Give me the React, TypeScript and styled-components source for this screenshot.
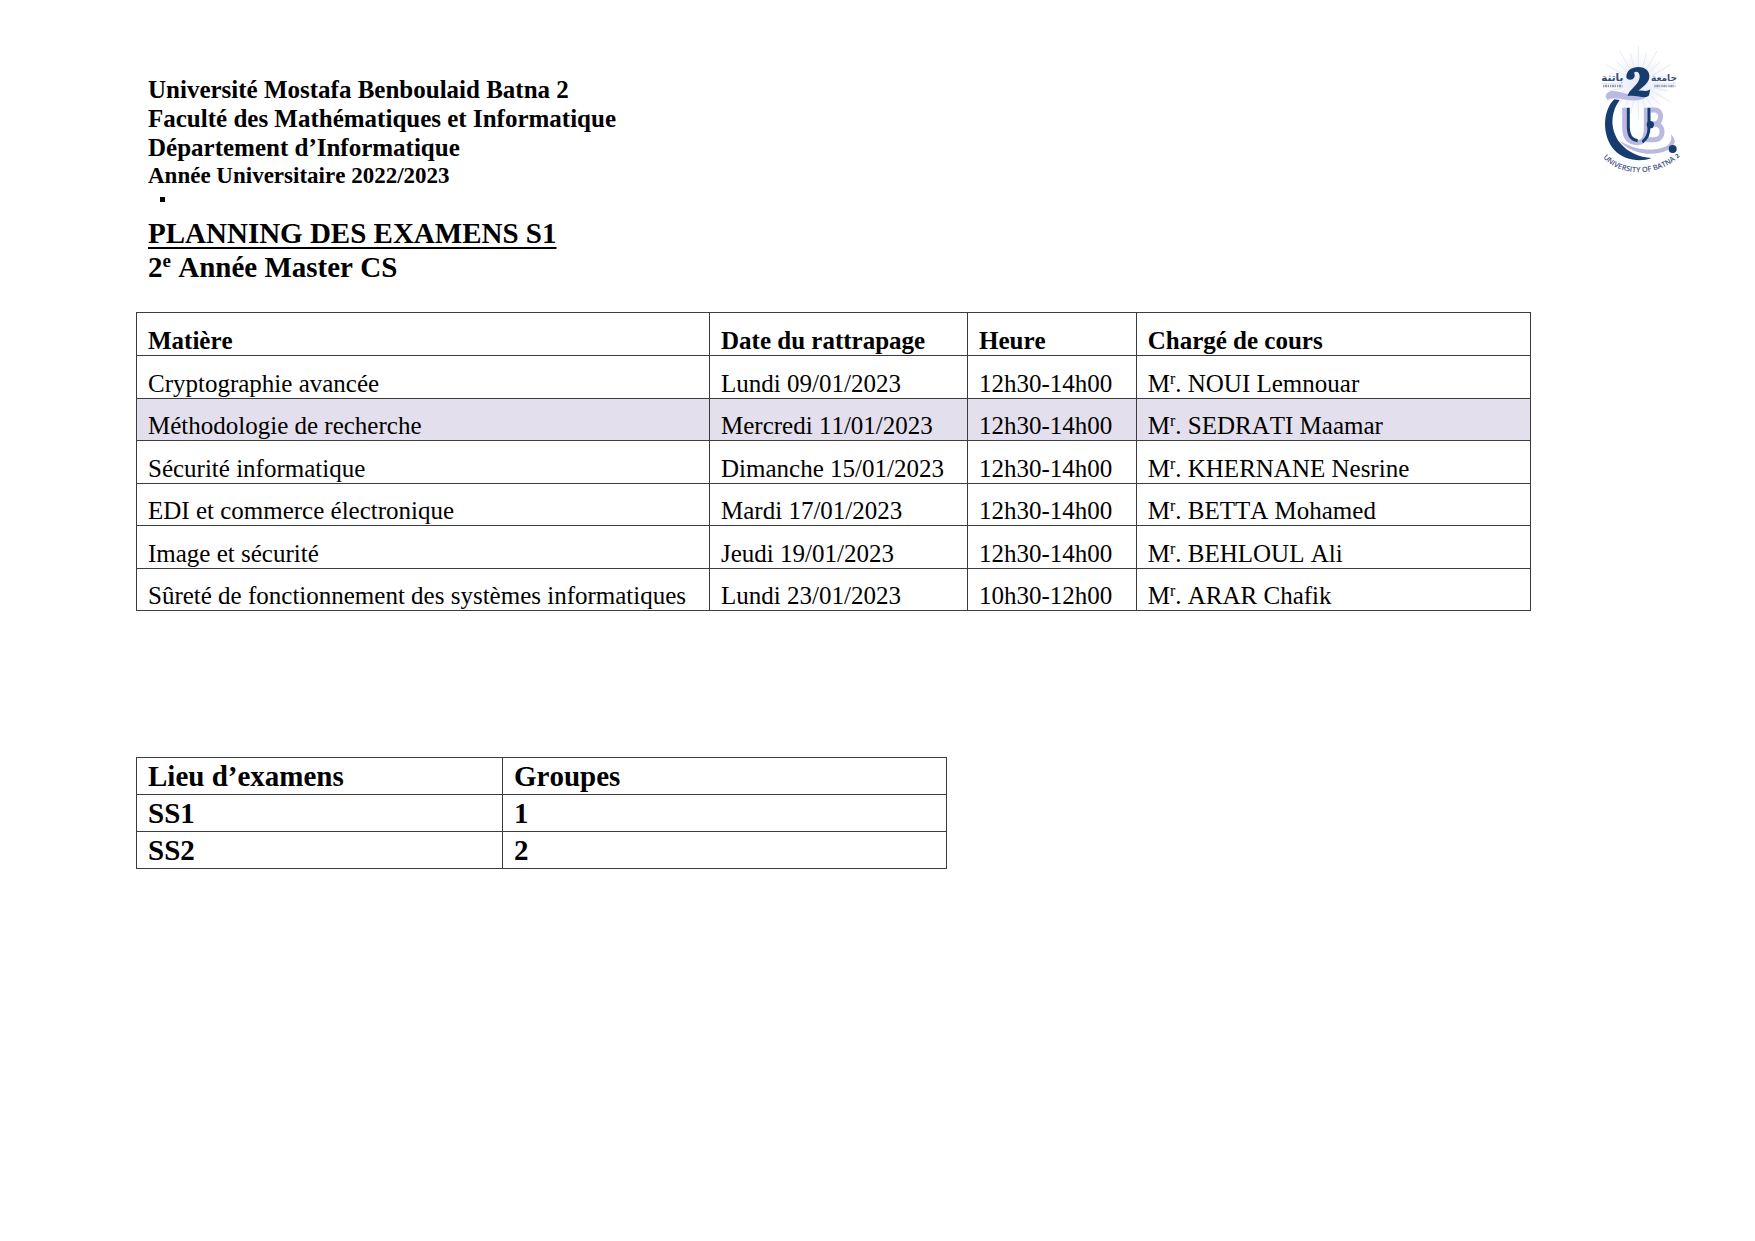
import React from "react";
import styled, { createGlobalStyle } from "styled-components";

const GlobalStyle = createGlobalStyle`
  body {
    margin: 0;
    background: #fff;
    color: #000;
    font-family: "Liberation Serif", "Times New Roman", serif;
    font-size: 25px;
    font-kerning: none;
    line-height: 28px;
  }
`;

const Page = styled.main`
  padding: 40px 60px 40px 136px;
`;

const Header = styled.header`
  display: flex;
  justify-content: space-between;
  align-items: flex-start;
`;

const Heading = styled.div`
  padding: 35px 0 0 12px;
  font-weight: bold;
`;

const Line = styled.p<{ $small?: boolean }>`
  margin: 0;
  font-size: ${(p) => (p.$small ? 23 : 25)}px;
  line-height: ${(p) => (p.$small ? 27 : 29)}px;
`;

const Bullet = styled.span`
  display: block;
  width: 5px;
  height: 5px;
  margin: 8px 0 0 12px;
  background: #000;
`;

const Title = styled.h1`
  margin: 14px 0 0;
  font-size: 29px;
  line-height: 34px;
  text-decoration: underline;
  text-decoration-thickness: 2px;
  text-underline-offset: 4px;
`;

const Subtitle = styled.h2`
  margin: 0;
  font-size: 29px;
  line-height: 34px;
`;

const Sup = styled.sup<{ $size: number; $rise: number }>`
  font-size: ${(p) => p.$size}px;
  line-height: 0;
  vertical-align: ${(p) => p.$rise}px;
`;

const LogoArt = styled.svg`
  width: 110px;
  height: 150px;
  flex: none;
`;

const Schedule = styled.table`
  width: 89.5%;
  height: 299px;
  margin-top: 28px;
  border-collapse: collapse;
  table-layout: fixed;

  th {
    padding-top: 14px;
  }
`;

const Rooms = styled.table`
  width: 52%;
  margin-top: 146px;
  border-collapse: collapse;
  table-layout: fixed;
  font-size: 29px;
  line-height: 36px;
  font-weight: bold;
`;

const Col = styled.col<{ $width: string }>`
  width: ${(p) => p.$width};
`;

const Row = styled.tr<{ $shaded?: boolean }>`
  background: ${(p) => (p.$shaded ? "#e4dfec" : "transparent")};
`;

const Cell = styled.td`
  padding: 0 11px;
  border: 1px solid #3c3c3c;
  text-align: left;
  vertical-align: bottom;
  white-space: nowrap;
`;

const exams = [
  { subject: "Cryptographie avancée", date: "Lundi 09/01/2023", time: "12h30-14h00", teacher: "NOUI Lemnouar" },
  { subject: "Méthodologie de recherche", date: "Mercredi 11/01/2023", time: "12h30-14h00", teacher: "SEDRATI Maamar", shaded: true },
  { subject: "Sécurité informatique", date: "Dimanche 15/01/2023", time: "12h30-14h00", teacher: "KHERNANE Nesrine" },
  { subject: "EDI et commerce électronique", date: "Mardi 17/01/2023", time: "12h30-14h00", teacher: "BETTA Mohamed" },
  { subject: "Image et sécurité", date: "Jeudi 19/01/2023", time: "12h30-14h00", teacher: "BEHLOUL Ali" },
  { subject: "Sûreté de fonctionnement des systèmes informatiques", date: "Lundi 23/01/2023", time: "10h30-12h00", teacher: "ARAR Chafik" },
];

const rooms = [
  ["SS1", "1"],
  ["SS2", "2"],
];

const rays = Array.from({ length: 25 }, (_, i) => {
  const a = ((i * 15 - 180) * Math.PI) / 180;
  const far = i % 2 ? 92 : 112;
  return [160 + 46 * Math.cos(a), 130 + 46 * Math.sin(a), 160 + far * Math.cos(a), 130 + far * Math.sin(a)];
});

function Logo() {
  return (
    <LogoArt viewBox="0 0 330 450" role="img" aria-label="University of Batna 2">
      <defs>
        <path id="motto" d="M54 352 Q92 396 162 397 Q238 396 292 342" />
        <radialGradient id="halo">
          <stop offset="0" stopColor="#e6eaf5" />
          <stop offset="1" stopColor="#fff" />
        </radialGradient>
      </defs>
      <circle cx="160" cy="130" r="95" fill="url(#halo)" />
      <g stroke="#e6eaf5" strokeWidth="3">
        {rays.map(([x1, y1, x2, y2], i) => (
          <line key={i} x1={x1} y1={y1} x2={x2} y2={y2} />
        ))}
      </g>
      <path
        d="M88 178 C52 212 50 288 88 330 C116 360 164 368 200 354 C162 352 130 338 106 310 C76 272 74 222 104 180 Z"
        fill="#173d70"
      />
      <path
        d="M62 168 C66 152 84 150 104 156 C130 164 158 170 194 158 C184 178 160 184 130 180 C100 176 84 170 66 180 Z"
        fill="#b9b9e2"
      />
      <path d="M103 302 C136 342 208 352 248 330 C272 316 276 302 258 283 C262 302 254 316 236 322 C196 336 148 328 103 302 Z" fill="#b9b9e2" />
      <g fill="none">
        <path d="M197 210 H210 C234 210 232 252 206 252 H196 M208 252 C240 252 238 299 208 299 H182" stroke="#b9b9e2" strokeWidth="15" />
        <path d="M119 203 V262 C119 294 134 308 158 308 C176 308 184 292 184 262 V203" stroke="#b9b9e2" strokeWidth="15" />
        <path d="M130 203 V262 C130 288 142 300 158 302" stroke="#173d70" strokeWidth="9" />
        <path d="M192 203 V262 C192 284 184 298 172 306" stroke="#173d70" strokeWidth="9" />
      </g>
      <circle cx="196" cy="254" r="11" fill="#173d70" />
      <circle cx="263" cy="327" r="12" fill="#173d70" />
      <path
        d="M124 111 C124 92 140 81 160 81 C182 81 195 94 193 112 C191 130 174 140 160 153 C174 148 182 158 196 148 L192 166 C180 180 162 164 128 168 C130 150 162 136 164 112 C165 97 155 92 147 98 C153 108 146 119 136 119 C129 119 124 116 124 111 Z"
        fill="#173d70"
      />
      <g fill="#354f7b" textAnchor="middle" fontFamily='"DejaVu Sans", sans-serif'>
        <text x="82" y="123" fontSize="31" fontWeight="bold">باتنة</text>
        <text x="237" y="123" fontSize="27" fontWeight="bold">جامعة</text>
      </g>
      <g stroke="#8c9ab8" strokeWidth="7" strokeDasharray="4 2 7 2 3 3">
        <line x1="54" y1="138" x2="112" y2="138" />
        <line x1="208" y1="138" x2="272" y2="138" />
      </g>
      <text fontFamily='"Open Sans", sans-serif' fontSize="22" fontWeight="600" fill="#3d5380">
        <textPath href="#motto">
          UNIVERSITY OF BATNA{" "}
          <tspan fontFamily='"DejaVu Serif", serif' fontWeight="bold" fontSize="17" fill="#173d70">2</tspan>
        </textPath>
      </text>
    </LogoArt>
  );
}

export default function App() {
  return (
    <>
      <GlobalStyle />
      <Page>
        <Header>
          <Heading>
            <Line>Université Mostafa Benboulaid Batna 2</Line>
            <Line>Faculté des Mathématiques et Informatique</Line>
            <Line>Département d’Informatique</Line>
            <Line $small>Année Universitaire 2022/2023</Line>
            <Bullet />
            <Title>PLANNING DES EXAMENS S1</Title>
            <Subtitle>
              2<Sup $size={19} $rise={10}>e</Sup> Année Master CS
            </Subtitle>
          </Heading>
          <Logo />
        </Header>

        <Schedule>
          <colgroup>
            <Col $width="41.1%" />
            <Col $width="18.5%" />
            <Col $width="12.1%" />
            <Col $width="28.3%" />
          </colgroup>
          <thead>
            <Row>
              <Cell as="th" scope="col">Matière</Cell>
              <Cell as="th" scope="col">Date du rattrapage</Cell>
              <Cell as="th" scope="col">Heure</Cell>
              <Cell as="th" scope="col">Chargé de cours</Cell>
            </Row>
          </thead>
          <tbody>
            {exams.map((e) => (
              <Row key={e.subject} $shaded={e.shaded}>
                <Cell>{e.subject}</Cell>
                <Cell>{e.date}</Cell>
                <Cell>{e.time}</Cell>
                <Cell>
                  M<Sup $size={16} $rise={8}>r</Sup>. {e.teacher}
                </Cell>
              </Row>
            ))}
          </tbody>
        </Schedule>

        <Rooms>
          <colgroup>
            <Col $width="45.2%" />
            <Col $width="54.8%" />
          </colgroup>
          <thead>
            <Row>
              <Cell as="th" scope="col">Lieu d’examens</Cell>
              <Cell as="th" scope="col">Groupes</Cell>
            </Row>
          </thead>
          <tbody>
            {rooms.map(([room, group]) => (
              <Row key={room}>
                <Cell>{room}</Cell>
                <Cell>{group}</Cell>
              </Row>
            ))}
          </tbody>
        </Rooms>
      </Page>
    </>
  );
}
